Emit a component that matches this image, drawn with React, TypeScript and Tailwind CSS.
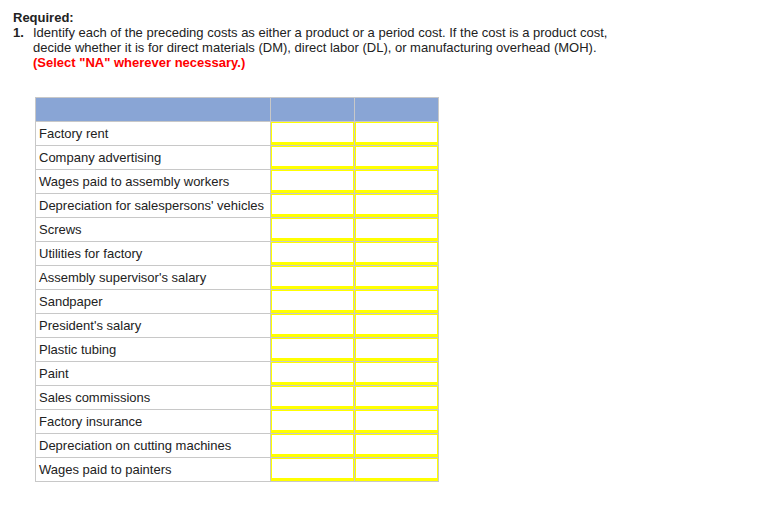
const items = [
  "Factory rent",
  "Company advertising",
  "Wages paid to assembly workers",
  "Depreciation for salespersons' vehicles",
  "Screws",
  "Utilities for factory",
  "Assembly supervisor's salary",
  "Sandpaper",
  "President's salary",
  "Plastic tubing",
  "Paint",
  "Sales commissions",
  "Factory insurance",
  "Depreciation on cutting machines",
  "Wages paid to painters",
];

function AnswerCell() {
  return (
    <td className="h-6 border border-[#c8c8c8] p-0">
      <div className="h-[23px] w-full border border-b-[3px] border-[#ffff00] bg-white" />
    </td>
  );
}

export default function App() {
  return (
    <div className="min-h-[508px] w-[762px] bg-white pl-[13px] pt-[10px] font-['Liberation_Sans',Arial,sans-serif] text-[13px] leading-[15px] text-[#222]">
      <p className="font-bold">Required:</p>
      <div className="flex">
        <span className="w-5 shrink-0 font-bold">1.</span>
        <div>
          <p>
            Identify each of the preceding costs as either a product or a period cost. If the cost is a product cost,
            <br />
            decide whether it is for direct materials (DM), direct labor (DL), or manufacturing overhead (MOH).
          </p>
          <p className="font-bold text-[#ff0000]">(Select "NA" wherever necessary.)</p>
        </div>
      </div>

      <table className="mt-[27px] ml-[22px] w-[404px] border-collapse">
        <thead>
          <tr className="h-6 bg-[#89a5d5]">
            <th className="w-[235px] border border-[#c8c8c8] p-0" />
            <th className="w-[84px] border border-[#c8c8c8] p-0" />
            <th className="w-[84px] border border-[#c8c8c8] p-0" />
          </tr>
        </thead>
        <tbody>
          {items.map((item) => (
            <tr key={item} className="h-6">
              <td className="border border-[#c8c8c8] px-[3px] py-0 align-middle leading-[15px]">
                {item}
              </td>
              <AnswerCell />
              <AnswerCell />
            </tr>
          ))}
        </tbody>
      </table>
    </div>
  );
}
